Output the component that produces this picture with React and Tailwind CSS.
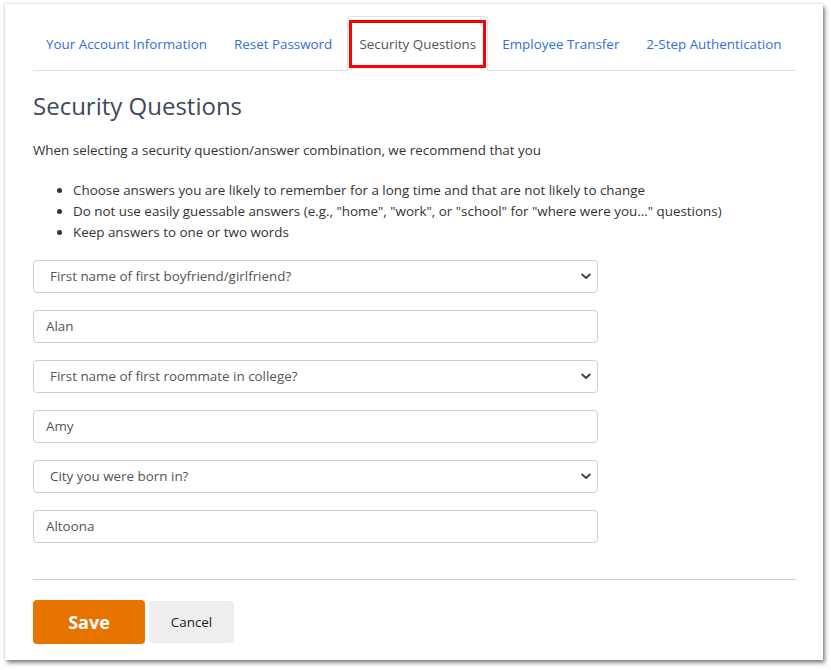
import React from "react";

const font = { fontFamily: '"Open Sans", "Noto Sans", sans-serif' };

function Chevron() {
  return (
    <svg width="10" height="7" viewBox="0 0 10 7" className="shrink-0">
      <path d="M1.2 1.5 L5 5 L8.8 1.5" fill="none" stroke="#444" strokeWidth="2" strokeLinecap="round" strokeLinejoin="round" />
    </svg>
  );
}

function Select({ text }) {
  return (
    <div className="flex h-[33px] w-[565px] items-center justify-between rounded-[4px] border border-[#cfcfcf] bg-white pl-[16px] pr-[6px] text-[13.4px] text-[#555]">
      <span>{text}</span>
      <Chevron />
    </div>
  );
}

function Input({ text }) {
  return (
    <div className="flex h-[33px] w-[565px] items-center rounded-[4px] border border-[#cfcfcf] bg-white pl-[12px] text-[13.4px] text-[#555]">
      {text}
    </div>
  );
}

export default function App() {
  const tabs = ["Your Account Information", "Reset Password"];
  const tabs2 = ["Employee Transfer", "2-Step Authentication"];
  return (
    <div className="h-[670px] w-[831px] bg-white pl-[5px] pt-[4px]" style={font}>
      <div className="h-[656px] w-[818px] bg-white pl-[28px] pr-[27px] pt-[13px] shadow-[2px_3px_4px_rgba(0,0,0,0.45),0_0_3px_rgba(0,0,0,0.2)]">
        {/* Tabs */}
        <div className="flex h-[54px] items-end whitespace-nowrap border-b border-[#dfe1e6] text-[13.4px]">
          {tabs.map((t) => (
            <div key={t} className="mr-px flex h-[54px] shrink-0 items-center px-[13px] pt-[2px] text-[#2f6fe0]">
              {t}
            </div>
          ))}
          <div className="-mb-px ml-[1px] flex h-[55px] w-[141px] shrink-0 flex-col rounded-t-[4px] border border-b-0 border-[#dfe1e6] bg-white px-px pt-[3px]">
            <div className="flex h-[48px] items-center justify-center border-[3px] border-[#ff0000] text-[#555]">
              Security Questions
            </div>
          </div>
          {tabs2.map((t) => (
            <div key={t} className="ml-px flex h-[54px] shrink-0 items-center px-[13px] pt-[2px] text-[#2f6fe0]">
              {t}
            </div>
          ))}
        </div>

        <h1 className="mt-[18px] text-[24px] leading-[34px] text-[#3d4a5c]">Security Questions</h1>

        <p className="mt-[17px] text-[13.4px] leading-[20px] text-[#333]">
          When selecting a security question/answer combination, we recommend that you
        </p>
        <ul className="mt-[20px] list-disc pl-[40px] text-[13.4px] leading-[21px] text-[#333]">
          <li>Choose answers you are likely to remember for a long time and that are not likely to change</li>
          <li>Do not use easily guessable answers (e.g., "home", "work", or "school" for "where were you..." questions)</li>
          <li>Keep answers to one or two words</li>
        </ul>

        <div className="mt-[17px] flex flex-col gap-[17px]">
          <Select text="First name of first boyfriend/girlfriend?" />
          <Input text="Alan" />
          <Select text="First name of first roommate in college?" />
          <Input text="Amy" />
          <Select text="City you were born in?" />
          <Input text="Altoona" />
        </div>

        <div className="mt-[36px] border-t border-[#cccccc]" />

        <div className="mt-[20px] flex items-center gap-[4px]">
          <button className="h-[44px] w-[112px] rounded-[4px] bg-[#e87400] text-[18px] font-bold text-white">
            Save
          </button>
          <button className="h-[42px] w-[85px] rounded-[4px] bg-[#eeeeee] text-[13.4px] text-[#222]">
            Cancel
          </button>
        </div>
      </div>
    </div>
  );
}
